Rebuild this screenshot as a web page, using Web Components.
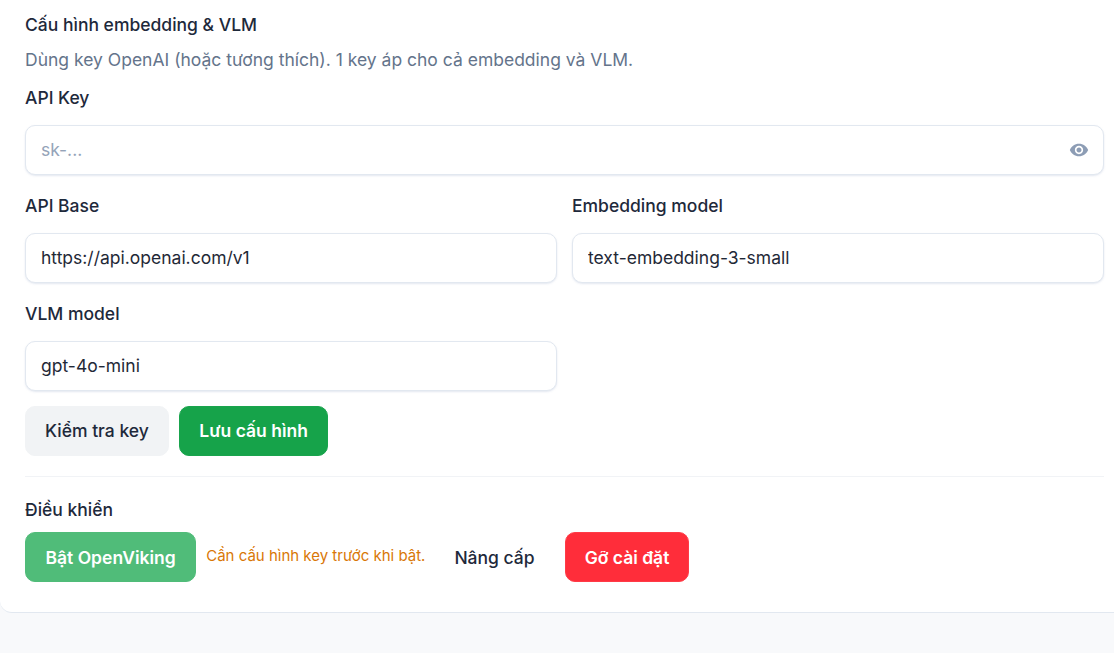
<!DOCTYPE html>
<html lang="vi">
<head>
<meta charset="utf-8">
<title>OpenViking</title>
<style>
  html, body { margin: 0; height: 100%; }
  body {
    background: #f8f9fb;
    font-family: Inter, "Noto Sans", sans-serif;
    color: #1f2937;
    overflow: hidden;
  }
</style>
</head>
<body>
<template id="card-tpl">
  <style>
    :host {
      display: block;
      box-sizing: border-box;
      height: 613px;
      padding: 14px 10px 0 25px;
      background: #fff;
      border-bottom: 1px solid #e2e8f0;
      border-bottom-left-radius: 12px;
    }
    .title {
      font-size: 17.5px;
      line-height: 22px;
      font-weight: 500;
      color: #1e293b;
    }
    .sub {
      margin-top: 12px;
      font-size: 17.5px;
      line-height: 24px;
      color: #64748b;
    }
    .grid {
      display: grid;
      grid-template-columns: 1fr 1fr;
      column-gap: 15px;
      row-gap: 19.5px;
      margin-top: 14px;
    }
    .wide { grid-column: 1 / 3; }
    .actions { display: flex; gap: 10px; margin-top: 15.1px; }
    hr { border: 0; border-top: 1px solid #f1f3f6; margin: 20.4px 0 0; }
    .control-title { margin-top: 22px; }
    .controls { display: flex; align-items: center; margin-top: 11.4px; }
    .hint { margin: 0 29px 0 10px; font-size: 15px; line-height: 20px; color: #d97706; transform: translateY(-1px); }
    .controls .gap { margin-left: 30px; }
  </style>
  <div class="title">Cấu hình embedding &amp; VLM</div>
  <div class="sub">Dùng key OpenAI (hoặc tương thích). 1 key áp cho cả embedding và VLM.</div>
  <div class="grid">
    <field-box class="wide" label="API Key" placeholder="sk-..." secret></field-box>
    <field-box label="API Base" value="https://api.openai.com/v1"></field-box>
    <field-box label="Embedding model" value="text-embedding-3-small"></field-box>
    <field-box label="VLM model" value="gpt-4o-mini"></field-box>
  </div>
  <div class="actions">
    <ui-btn kind="muted">Kiểm tra key</ui-btn>
    <ui-btn kind="green">Lưu cấu hình</ui-btn>
  </div>
  <hr>
  <div class="title control-title">Điều khiển</div>
  <div class="controls">
    <ui-btn kind="green" dim>Bật OpenViking</ui-btn>
    <span class="hint">Cần cấu hình key trước khi bật.</span>
    <ui-btn kind="plain">Nâng cấp</ui-btn>
    <ui-btn kind="red" class="gap">Gỡ cài đặt</ui-btn>
  </div>
</template>

<template id="field-tpl">
  <style>
    :host { display: block; }
    label {
      display: block;
      font-size: 17.5px;
      line-height: 24px;
      font-weight: 500;
      color: #1e293b;
      margin-bottom: 15px;
    }
    .wrap { position: relative; }
    input {
      display: block;
      box-sizing: border-box;
      width: 100%;
      height: 49.5px;
      padding: 0 15px;
      font: 400 17.5px Inter, "Noto Sans", sans-serif;
      color: #1f2937;
      background: #fff;
      border: 1px solid #e2e8f0;
      border-radius: 10px;
      box-shadow: 0 1px 2px rgba(148, 163, 200, .25);
      outline: none;
    }
    input::placeholder { color: #94a3b8; opacity: 1; }
    svg { position: absolute; right: 15px; top: 15px; width: 20px; height: 20px; fill: #8d9db5; }
  </style>
  <label></label>
  <div class="wrap"><input type="text"></div>
</template>

<template id="btn-tpl">
  <style>
    :host { display: inline-block; }
    button {
      display: block;
      box-sizing: border-box;
      height: 50px;
      padding: 0 19px;
      font: 500 17.5px Inter, "Noto Sans", sans-serif;
      border: 1px solid transparent;
      border-radius: 10px;
      background: none;
      color: #1e293b;
      cursor: pointer;
    }
    :host([kind="muted"]) button { background: #f1f3f5; border-color: #f1f3f5; }
    :host([kind="green"]) button {
      padding: 0 19.5px;
      background: #16a34a;
      border-color: #19a44d;
      color: #fff;
      font-weight: 600;
    }
    :host([kind="green"][dim]) button { background: #50bc79; border-color: #50bc79; }
    :host([kind="red"]) button { background: #ff2d3a; border-color: #ff3b47; color: #fff; font-weight: 600; }
    :host([kind="plain"]) button { padding: 0; border: 0; }
  </style>
  <button type="button"><slot></slot></button>
</template>

<settings-card></settings-card>

<script>
  function stamp(el, id) {
    el.attachShadow({ mode: 'open' });
    el.shadowRoot.appendChild(document.getElementById(id).content.cloneNode(true));
  }

  class FieldBox extends HTMLElement {
    constructor() {
      super();
      stamp(this, 'field-tpl');
    }
    connectedCallback() {
      const root = this.shadowRoot;
      const input = root.querySelector('input');
      root.querySelector('label').textContent = this.getAttribute('label');
      if (this.hasAttribute('placeholder')) input.placeholder = this.getAttribute('placeholder');
      if (this.hasAttribute('value')) input.setAttribute('value', this.getAttribute('value'));
      if (this.hasAttribute('secret')) {
        root.querySelector('.wrap').insertAdjacentHTML('beforeend',
          '<svg viewBox="0 0 24 24"><path d="M12 4.5C7 4.5 2.73 7.61 1 12c1.73 4.39 6 7.5 11 7.5s9.27-3.11 11-7.5c-1.73-4.39-6-7.5-11-7.5zM12 17c-2.76 0-5-2.24-5-5s2.24-5 5-5 5 2.24 5 5-2.24 5-5 5zm0-8c-1.66 0-3 1.34-3 3s1.34 3 3 3 3-1.34 3-3-1.34-3-3-3z"/></svg>');
      }
    }
  }

  class UiBtn extends HTMLElement {
    constructor() {
      super();
      stamp(this, 'btn-tpl');
    }
  }

  class SettingsCard extends HTMLElement {
    constructor() {
      super();
      stamp(this, 'card-tpl');
    }
  }

  customElements.define('field-box', FieldBox);
  customElements.define('ui-btn', UiBtn);
  customElements.define('settings-card', SettingsCard);
</script>
</body>
</html>
